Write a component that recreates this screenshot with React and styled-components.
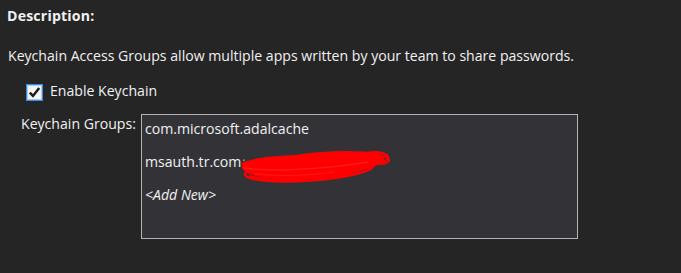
import React from "react";
import styled, { createGlobalStyle } from "styled-components";

const GlobalStyle = createGlobalStyle`
  html, body {
    margin: 0;
    padding: 0;
    background: #252526;
  }
  body {
    font-family: "Open Sans", "Noto Sans", sans-serif;
    font-size: 14.1px;
    line-height: 20px;
    color: #f1f1f1;
  }
`;

const Page = styled("div")({
  display: "flex",
  flexDirection: "column",
  width: 681,
  height: 273,
  padding: "6px 0 0 0",
  boxSizing: "border-box",
});

const Heading = styled("div")({
  fontWeight: 700,
  paddingLeft: 7,
  letterSpacing: "0.2px",
});

const Paragraph = styled("p")({
  margin: "20px 0 0 8px",
});

const CheckRow = styled("label")({
  display: "flex",
  alignItems: "center",
  gap: 7,
  margin: "15px 0 0 26px",
  height: 20,
});

const Box = styled("span")({
  display: "block",
  width: 17,
  height: 17,
  marginTop: 2,
  lineHeight: 0,
});

const FieldRow = styled("div")({
  display: "grid",
  gridTemplateColumns: "120px 437px",
  marginTop: 13,
  paddingLeft: 21,
});

const FieldLabel = styled("div")({});

const ListBox = styled("div")({
  height: 125,
  boxSizing: "border-box",
  border: "1px solid #b4b4b4",
  background: "#333337",
  padding: "4px 3px 0",
});

const Item = styled("div")`
  position: relative;
  height: 33px;
  font-style: ${({ $placeholder }) => ($placeholder ? "italic" : "normal")};
`;

const Scribble = styled("svg")({
  position: "absolute",
  left: 96,
  top: -4,
});

function CheckBox() {
  return (
    <Box>
      <svg width="17" height="17" viewBox="0 0 17 17">
        <rect x="0.5" y="0.5" width="16" height="16" fill="#f4f4f4" stroke="#3c8ce6" />
        <rect x="1.5" y="1.5" width="14" height="14" fill="none" stroke="#a8cdf5" />
        <path d="M3.8 8.6 L7 11.9 L13.2 4" fill="none" stroke="#1b1b1b" strokeWidth="2.5" />
      </svg>
    </Box>
  );
}

function RedScribble() {
  const red = "#ff0000";
  return (
    <Scribble width="152" height="36" viewBox="0 0 156 36">
      <path
        d="M1 15 C10 10, 30 8, 52 7 C82 4, 118 2, 138 5 C150 7, 150 13, 140 17 C122 25, 92 33, 62 33 C36 33, 16 30, 6 25 C1 22, 0 18, 1 15 Z"
        fill={red}
      />
      <ellipse cx="134" cy="10" rx="17" ry="6" transform="rotate(-3 134 10)" fill="none" stroke={red} strokeWidth="2.5" />
      <ellipse cx="143" cy="12" rx="9" ry="4" fill="none" stroke={red} strokeWidth="2" />
      <ellipse cx="96" cy="9" rx="42" ry="5" transform="rotate(-2 96 9)" fill="none" stroke={red} strokeWidth="2.5" />
      <ellipse cx="70" cy="22" rx="66" ry="11" transform="rotate(-4 70 22)" fill="none" stroke={red} strokeWidth="2.5" />
      <path d="M8 28 C30 35, 70 35, 104 28" fill="none" stroke={red} strokeWidth="2.5" />
      <path d="M2 20 C30 24, 80 22, 130 14" fill="none" stroke="#ff2a2a" strokeWidth="1.2" opacity="0.7" />
      <path d="M14 26 C40 29, 70 28, 96 24" fill="none" stroke="#ff2a2a" strokeWidth="1" opacity="0.6" />
      <circle cx="3" cy="12" r="1" fill="#8a8a8a" />
    </Scribble>
  );
}

export default function App() {
  return (
    <>
      <GlobalStyle />
      <Page>
        <Heading>Description:</Heading>
        <Paragraph>
          Keychain Access Groups allow multiple apps written by your team to share passwords.
        </Paragraph>
        <CheckRow>
          <CheckBox />
          Enable Keychain
        </CheckRow>
        <FieldRow>
          <FieldLabel>Keychain Groups:</FieldLabel>
          <ListBox>
            <Item>com.microsoft.adalcache</Item>
            <Item>
              msauth.tr.com.
              <RedScribble />
            </Item>
            <Item $placeholder>&lt;Add New&gt;</Item>
          </ListBox>
        </FieldRow>
      </Page>
    </>
  );
}
